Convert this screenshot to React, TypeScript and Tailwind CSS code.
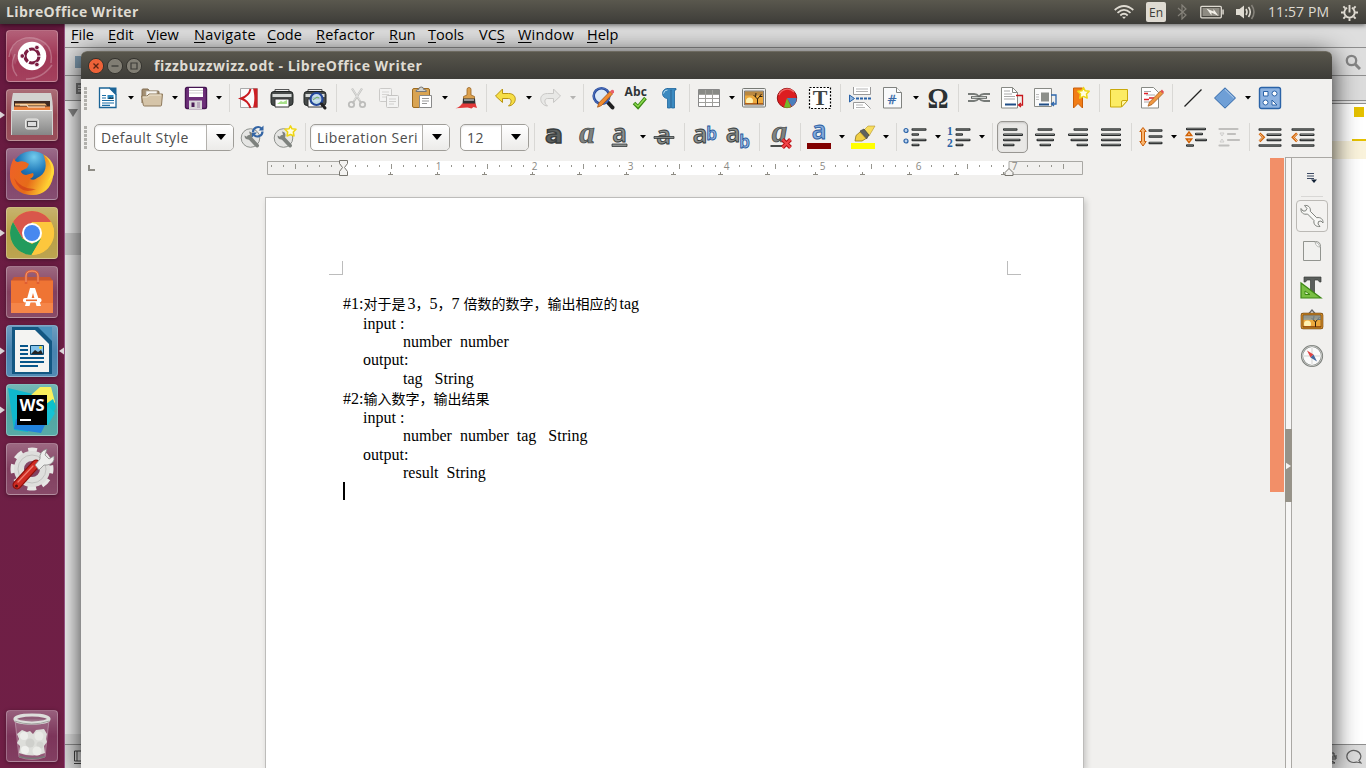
import React from "react";

type Kids = { children?: React.ReactNode; className?: string };

const UI = "font-['Open_Sans','Noto_Sans',sans-serif]";

/* ---------- shared pieces ---------- */

function Ico({ children }: Kids) {
  return (
    <svg viewBox="0 0 24 24" className="h-6 w-6 shrink-0 overflow-visible" fill="none">
      {children}
    </svg>
  );
}

function Drop({ dim }: { dim?: boolean }) {
  return (
    <span className="flex w-5 shrink-0 justify-center pl-[2px]">
      <svg viewBox="0 0 6 4" className={dim ? "h-1 w-1.5 text-[#b5b4b2]" : "h-1 w-1.5 text-black"}>
        <path d="M0 0h6L3 3.6z" fill="currentColor" />
      </svg>
    </span>
  );
}

function Sep({ className = "w-4 justify-center" }: Kids) {
  return (
    <span className={`flex shrink-0 ${className}`}>
      <span className="h-7 w-px bg-[#d9d8d5]" />
    </span>
  );
}

function Grip() {
  return (
    <span className="flex w-[3px] shrink-0 flex-col gap-px">
      {[0, 1, 2, 3, 4, 5].map((i) => (
        <span key={i} className="h-[3px] w-[3px] bg-[#b1b0ac]" />
      ))}
    </span>
  );
}

function Combo({ text, className, button }: { text: string; className: string; button: string }) {
  return (
    <span className={`flex h-[27px] shrink-0 rounded-[5px] border border-[#9f9d98] bg-white shadow-[inset_0_1px_2px_rgba(0,0,0,0.12)] ${className}`}>
      <span className="flex flex-1 items-center overflow-hidden whitespace-nowrap pl-1.5 pt-px text-[14px] leading-normal tracking-[0.42px] text-[#4c4c4c]">
        {text}
      </span>
      <span className={`flex items-center justify-center rounded-r-[4px] border-l border-[#b3b1ad] bg-linear-to-b from-white to-[#ecebe9] ${button}`}>
        <svg viewBox="0 0 10 6" className="ml-px h-1.5 w-2.5">
          <path d="M0 0h10L5 6z" fill="#000" />
        </svg>
      </span>
    </span>
  );
}

/* ---------- standard toolbar icons ---------- */

const NewDoc = () => (
  <Ico>
    <path d="M3.500 2h10l6.500 6.500V21.500H3.500z" fill="#fff" stroke="#1b6497" strokeWidth="1.300" />
    <path d="M13 1.500h7.500V9z" fill="#1b6497" />
    <path d="M6 9.500h4M6 12h4M6 14.500h12M6 17h12M6 19.300h8" stroke="#1b6ea5" strokeWidth="1.200" />
    <path d="M11.500 9h6v4h-6z" fill="#2c86bd" />
    <path d="M12 13l2-2 1.300 1 2-1v2z" fill="#153c52" />
  </Ico>
);
const Folder = () => (
  <Ico>
    <path d="M2 17V4q0-1 1-1h5l1.500 2H18q1 0 1 1v4" fill="#a48f72" stroke="#806c50" />
    <path d="M6 5h11v6H6z" fill="#f8f6f2" stroke="#b5aa98" strokeWidth=".7" />
    <path d="M1.500 10H7l2-2h13.500l-1 11q0 1-1 1h-16q-1 0-1.200-1z" fill="#d5c4a8" stroke="#8f7a5c" />
    <path d="M3 11h4.500l2-2h11.500" stroke="#efe5d3" />
  </Ico>
);
const Save = () => (
  <Ico>
    <rect x="1.500" y="1.500" width="21" height="21" rx="1.500" fill="#6d2f79" stroke="#451551" strokeWidth="1.400" />
    <path d="M5 2h14v9H5z" fill="#fff" />
    <path d="M5 4.500h14M5 7h14" stroke="#cfcfcf" />
    <path d="M5 14.500h13V23H5z" fill="#d9d6d9" />
    <path d="M7.500 16.500h3V21h-3z" fill="#4b1c56" />
    <path d="M13 16h3v6h-3z" fill="#b9a9bd" />
  </Ico>
);
const Pdf = () => (
  <Ico>
    <path d="M3.500 2.500h17v19h-17z" fill="#fafafa" stroke="#a9a9a9" />
    <path d="M13.500 3C12.500 8 8.500 11 4 12.500 8.500 14 12 17 13.500 22" stroke="#c91a1f" strokeWidth="1.900" />
    <path d="M16 2.500h4.500v19H16c1.800-6 1.800-13 0-19z" fill="#cc1f24" />
  </Ico>
);
const PrinterBody = () => (
  <>
    <path d="M5 8V3.500h14V8" fill="#eee" stroke="#555" />
    <rect x="1" y="5.500" width="22" height="14" rx="3" fill="#474b4a" stroke="#202423" />
    <path d="M2.500 8h19v3h-19z" fill="#d7dad8" />
    <path d="M5 13h14v8H5z" fill="#fff" stroke="#333" />
    <path d="M7 18l4-3 2 1 4-2v4z" fill="#a8df8b" />
  </>
);
const Print = () => (
  <Ico>
    <PrinterBody />
  </Ico>
);
const Preview = () => (
  <Ico>
    <PrinterBody />
    <circle cx="13.500" cy="13" r="6" fill="#c4dcf2" fillOpacity=".85" stroke="#24489a" strokeWidth="2.200" />
    <path d="M18.500 18l3.500 4" stroke="#222" strokeWidth="3" strokeLinecap="round" />
    <path d="M10 14l4-3 2 1" stroke="#72b558" />
  </Ico>
);
const Cut = () => (
  <Ico>
    <path d="M7 2.500l9.500 15M17 2.500L7.500 17.500" stroke="#c1c1bf" strokeWidth="2.200" />
    <path d="M7 2.500l8 12M17 2.500l-8 12" stroke="#e9e9e7" strokeWidth=".8" />
    <circle cx="6.500" cy="18.500" r="2.700" stroke="#bdbdbb" strokeWidth="1.800" />
    <circle cx="17.500" cy="18.500" r="2.700" stroke="#bdbdbb" strokeWidth="1.800" />
  </Ico>
);
const Copy = () => (
  <Ico>
    <rect x="2.500" y="2.500" width="12" height="13" rx="1" fill="#f3f3f2" stroke="#cbcac8" />
    <path d="M5 6h7M5 8.500h7M5 11h7" stroke="#d6d5d3" />
    <rect x="9.500" y="9.500" width="12" height="12" rx="1" fill="#f3f3f2" stroke="#c5c4c2" />
    <path d="M12 13h7M12 15.500h7M12 18h5" stroke="#d0cfcd" />
  </Ico>
);
const Paste = () => (
  <Ico>
    <rect x="2.500" y="2.500" width="17" height="19" rx="1.500" fill="#d9a452" stroke="#9d6b20" />
    <path d="M6 5.500q0-2 2-2h.7a2.500 2.500 0 015 0h.7q2 0 2 2z" fill="#d1d3cf" stroke="#777" />
    <path d="M9.500 9.500h12v12h-12z" fill="#fff" stroke="#8a8a8a" />
    <path d="M12 12.500h7M12 15h7M12 17.500h5" stroke="#989898" />
  </Ico>
);
const Brush = () => (
  <Ico>
    <path d="M12 9V3.500a2 2 0 014 0V9l3.500 1.500v3h-11v-3z" fill="#dca14e" stroke="#9b6623" strokeWidth=".8" />
    <path d="M8 12.500h12l.5 6h-13z" fill="#2f3232" />
    <path d="M9 14h10" stroke="#d8d8d8" strokeWidth="1.200" />
    <path d="M7 17.500h13.500l1.500 4.500-3.500-1-2 1.500-4-1-12 .8c3.500-1 5.500-2.800 6.500-4.800z" fill="#e23939" />
  </Ico>
);
const Undo = () => (
  <Ico>
    <path d="M8.500 3L1.500 10l7 6.500v-4h6c3 0 4 4 0 7.500 8-.5 10-12.500 0-12.500h-6z" fill="#f6de45" stroke="#b89412" strokeLinejoin="round" />
  </Ico>
);
const Redo = () => (
  <Ico>
    <path d="M15.500 3l7 7-7 6.500v-4h-6c-3 0-4 4 0 7.500-8-.5-10-12.500 0-12.500h6z" fill="#e8e8e6" stroke="#c9c8c6" strokeLinejoin="round" />
  </Ico>
);
const Find = () => (
  <Ico>
    <path d="M17 16.500l4.500 5" stroke="#202020" strokeWidth="4" strokeLinecap="round" />
    <circle cx="10.500" cy="10" r="7.800" fill="#dce9f6" stroke="#26499c" strokeWidth="2.600" />
    <circle cx="10.500" cy="10" r="8" stroke="#6b8fd0" strokeWidth=".6" />
    <path d="M19 5.500l2.500 2.500L10.500 19.500l-4 1.700 1.500-4.500z" fill="#f08c31" stroke="#a65312" strokeWidth=".8" />
    <path d="M19 5.500L20.500 4q1.500-.5 2.500.8v1.700L21.500 8z" fill="#ea5f6b" />
  </Ico>
);
const Spell = () => (
  <Ico>
    <text x="0.500" y="10" fontFamily="Open Sans" fontWeight="700" fontSize="12" textLength="22.500" fill="#2f3436">Abc</text>
    <path d="M10 17l4 4 7.500-9" stroke="#3c8a16" strokeWidth="3.600" />
    <path d="M10.500 17.500l3.500 3 7-8" stroke="#8fdc4f" strokeWidth="1.500" />
  </Ico>
);
const Pilcrow = () => (
  <Ico>
    <path d="M10 2.500h9V4h-1.500v18H14.500V4h-1v18H10.500V12.500a5 5 0 010-10z" fill="#3c8ac0" stroke="#1c659d" strokeWidth=".8" />
    <path d="M6.500 7.500a4 4 0 014-3.500" stroke="#b6daf0" />
  </Ico>
);
const TableI = () => (
  <Ico>
    <path d="M1.500 3.500h21v17h-21z" fill="#fff" stroke="#888" />
    <path d="M2 4h20v4H2z" fill="#888a85" />
    <path d="M2 8.500h20M2 12.500h20M2 16.500h20M8.500 4v16M15.500 4v16" stroke="#a0a09c" />
  </Ico>
);
const SunsetScene = () => (
  <>
    <path d="M3 5.500h18v13H3z" fill="#eda93d" />
    <path d="M3 5.500h18v4H3z" fill="#ba8840" />
    <circle cx="7.500" cy="15" r="3.500" fill="#fff1b0" />
    <path d="M3 17h18v1.500H3z" fill="#b45e16" />
    <path d="M15.500 18v-5l-4-4M15.500 13l4-5M13.500 11l.5-4M17.500 10.500h3" stroke="#2e210f" strokeWidth="1" />
  </>
);
const ImageI = () => (
  <Ico>
    <rect x=".5" y="2.500" width="23" height="18.500" rx="1" fill="#eee" stroke="#777a75" />
    <SunsetScene />
    <path d="M2.500 5h19v14h-19z" stroke="#666" strokeWidth=".8" />
  </Ico>
);
const Chart = () => (
  <Ico>
    <circle cx="12" cy="12" r="9.700" fill="#dc1d20" stroke="#951012" />
    <path d="M12 12h9.700a9.700 9.700 0 01-5 8.500z" fill="#4a7ebc" />
    <path d="M12 12l4 9a9.700 9.700 0 01-7 .3z" fill="#73b92b" />
    <path d="M4 9a9 9 0 0115-3" stroke="#f16b69" strokeWidth="1.200" />
  </Ico>
);
const TextBox = () => (
  <Ico>
    <rect x="1.500" y="1.500" width="21" height="21" fill="#fff" stroke="#000" strokeWidth="1.200" strokeDasharray="2 1.500" />
    <text x="12" y="19" textAnchor="middle" fontFamily="Liberation Serif" fontWeight="700" fontSize="22" fill="#3f4443">T</text>
  </Ico>
);
const PageBreak = () => (
  <Ico>
    <path d="M5.500 1v7.500h17V1" fill="#fff" stroke="#999" />
    <path d="M8 3h12M8 5.500h12" stroke="#b5b5b5" />
    <path d="M5.500 23v-6.500h11l6 6" fill="#fff" stroke="#999" />
    <path d="M8 19h7M8 21.500h9" stroke="#b5b5b5" />
    <path d="M8 12.500h15" stroke="#2b63a7" strokeWidth="2" strokeDasharray="3 1" />
    <path d="M1.500 9l5 3.500-5 3.500z" fill="#91b6df" stroke="#2b63a7" />
  </Ico>
);
const Field = () => (
  <Ico>
    <path d="M2.500 1.500h13l5 5v15.500h-18z" fill="#f9fafb" stroke="#80827f" />
    <path d="M15.500 1.500v5h5" fill="#fff" stroke="#80827f" />
    <text x="11" y="17.500" textAnchor="middle" fontFamily="DejaVu Sans" fontSize="12" fill="#386aa9" stroke="#386aa9" strokeWidth=".3">#</text>
  </Ico>
);
const Omega = () => (
  <Ico>
    <text x="1.500" y="21.500" fontFamily="Liberation Serif" fontWeight="700" fontSize="29" textLength="21" lengthAdjust="spacingAndGlyphs" fill="#2b3133">Ω</text>
  </Ico>
);
const Link = () => (
  <Ico>
    <path d="M1 8h6q3 0 5 2.500Q14 8 17 8h6M1 15h6q3 0 5-2.500 2 2.500 5 2.500h6" stroke="#777b78" strokeWidth="1.800" />
    <path d="M4 11.500h16" stroke="#5d615e" strokeWidth="2.600" />
    <path d="M5 11.500h14" stroke="#d8dbd8" strokeWidth=".9" />
  </Ico>
);
const Footnote = () => (
  <Ico>
    <path d="M1.500 1.500h11l5 5v15.500h-16z" fill="#fff" stroke="#888a85" />
    <path d="M12.500 1.500v5h5" stroke="#888a85" />
    <path d="M4 5h6M4 8h8M4 10.500h11M4 13h11" stroke="#aaa" />
    <path d="M5 18.500h11" stroke="#1e4d86" strokeWidth="2" />
    <path d="M16 9.500h6.500v9.500H19M21 17l-2.500 2 2.500 2" stroke="#c8171b" strokeWidth="1.300" />
  </Ico>
);
const Endnote = () => (
  <Ico>
    <path d="M1.500 2.500h17v18h-17z" fill="#fbfbfb" stroke="#888a85" />
    <path d="M8 6.500h8v9H8z" fill="#8c8f8b" />
    <path d="M3 8.500h3M3 11h3M3 13.500h3" stroke="#bbb" />
    <path d="M6 18.500h10" stroke="#1e4d86" strokeWidth="2" />
    <path d="M18 9h5v9h-3.500M21 16l-2.500 2 2.500 2" stroke="#2d66ab" strokeWidth="1.300" />
  </Ico>
);
const Star = ({ d = "M16.500 1.500l1.700 3.300 4 .4-2.700 2.900.7 4-3.700-1.700-3.700 1.700.7-4-2.700-2.900 4-.4z" }: { d?: string }) => (
  <path d={d} fill="#fffde0" stroke="#efd613" strokeWidth="1.500" strokeLinejoin="round" />
);
const Bookmark = () => (
  <Ico>
    <path d="M6.500 2h9v20L11 17.500 6.500 22z" fill="#f27d16" stroke="#c95e08" />
    <Star />
  </Ico>
);
const Note = () => (
  <Ico>
    <path d="M3.500 3.500h17v11l-6 6.500h-11z" fill="#fcec64" stroke="#c9a90b" />
    <path d="M14.500 21v-5q0-1.500 1.500-1.500h4.500z" fill="#fff6a7" stroke="#c9a90b" />
  </Ico>
);
const Track = () => (
  <Ico>
    <path d="M1.500 1.500h12l5 5v15.500h-17z" fill="#fff" stroke="#888a85" />
    <path d="M4 5.500h7M6 9h9M4 16h6" stroke="#aaa" />
    <path d="M4 7.500h4M9 12h5M4 13.500h5" stroke="#e12128" strokeWidth="1.300" />
    <path d="M20.500 5l2.500 2.500L12 18.500l-4 1.700 1.500-4z" fill="#ef9841" stroke="#a55a19" strokeWidth=".8" />
    <path d="M20.500 5L22 3.500 24 6l-1 1.500z" fill="#e44b4f" />
  </Ico>
);
const LineI = () => (
  <Ico>
    <path d="M3.500 20.500l17-17" stroke="#222" strokeWidth="1.300" />
  </Ico>
);
const Diamond = () => (
  <Ico>
    <path d="M12 1.800L22.500 12 12 22.200 1.500 12z" fill="#6f9fd6" stroke="#2f67a9" />
    <path d="M12 3.500L20.800 12" stroke="#b7d0ec" />
  </Ico>
);
const Shapes = () => (
  <Ico>
    <rect x="1.500" y="1.500" width="21" height="21" rx="2" fill="#8db2e0" stroke="#2b63a7" strokeWidth="1.400" />
    <path d="M5.500 5.500h4.500V10H5.500zM14 14v5h5z" fill="#fff" stroke="#2b63a7" />
    <circle cx="16.500" cy="7.500" r="2.500" fill="#fff" stroke="#2b63a7" />
    <circle cx="7.500" cy="16.500" r="2.500" fill="#fff" stroke="#2b63a7" />
  </Ico>
);

/* ---------- formatting toolbar icons ---------- */

const WrenchDisc = () => (
  <>
    <circle cx="10.500" cy="13" r="9.300" fill="#e5e5e3" stroke="#8e918d" />
    <path d="M9 12l8 8.500" stroke="#7e827e" strokeWidth="4" strokeLinecap="round" />
    <path d="M9 6.500a4 4 0 11-4.500 4l3 1.500L10 9.500z" fill="#7e827e" />
  </>
);
const StyleUpdate = () => (
  <Ico>
    <WrenchDisc />
    <path d="M13 7a5 5 0 018.500-3.500M22.500 6.500A5 5 0 0114 10" stroke="#3465a4" strokeWidth="2.200" />
    <path d="M23.500.5v5h-5zM12 12.500v-5h5z" fill="#3465a4" />
  </Ico>
);
const StyleNew = () => (
  <Ico>
    <WrenchDisc />
    <Star d="M17.500.8l1.500 3 4 .5-2.700 2.700.7 4-3.500-1.500L14 11l.7-4L12 4.300l4-.5z" />
  </Ico>
);

const SansA = ({ x = 11.5, y = 18, fill = "#8b8f8d", stroke = "#343a3b" }: { x?: number; y?: number; fill?: string; stroke?: string }) => (
  <text x={x} y={y} textAnchor="middle" fontFamily="Noto Sans" fontWeight="600" fontSize="25" fill={fill} stroke={stroke} strokeWidth=".9">
    a
  </text>
);
const SlantA = ({ x, y }: { x: number; y: number }) => (
  <text x={x} y={y} textAnchor="middle" fontFamily="Liberation Serif" fontWeight="700" fontStyle="italic" fontSize="31" fill="#7f8381" stroke="#34383a" strokeWidth=".7">
    a
  </text>
);
const BoldA = () => (
  <Ico>
    <text x="3" y="18" textLength="18" lengthAdjust="spacingAndGlyphs" fontFamily="DejaVu Sans" fontWeight="700" fontSize="25" fill="#5c605f" stroke="#3a3e3e" strokeWidth="1.400">a</text>
  </Ico>
);
const ItalicA = () => (
  <Ico>
    <SlantA x={12} y={18} />
  </Ico>
);
const UnderA = () => (
  <Ico>
    <SansA y={16.5} />
    <path d="M4 19h15v2.500H4z" fill="#8c908e" stroke="#34383a" strokeWidth=".8" />
  </Ico>
);
const StrikeA = () => (
  <Ico>
    <SansA y={18.5} />
    <path d="M2 11.500h20v2H2z" fill="#858987" stroke="#34383a" strokeWidth=".8" />
  </Ico>
);
const SmallB = ({ y }: { y: number }) => (
  <text x="18.500" y={y} textAnchor="middle" fontFamily="Noto Sans" fontWeight="600" fontSize="17" fill="#9dbde4" stroke="#285a9e" strokeWidth=".9">
    b
  </text>
);
const SuperB = () => (
  <Ico>
    <SansA x={7} y={18} />
    <SmallB y={14.5} />
  </Ico>
);
const SubB = () => (
  <Ico>
    <SansA x={7} y={16.500} />
    <SmallB y={22.500} />
  </Ico>
);
const ClearFmt = () => (
  <Ico>
    <SlantA x={10.500} y={17} />
    <path d="M1.500 21h12" stroke="#4a4d4b" strokeWidth="2" />
    <path d="M13.500 14.500l8 8m0-8l-8 8" stroke="#b60e12" strokeWidth="4" />
    <path d="M13.500 14.500l8 8m0-8l-8 8" stroke="#f04448" strokeWidth="2" />
  </Ico>
);
const FontColor = () => (
  <Ico>
    <SansA x={12} y={14} fill="#82aadb" stroke="#285a9e" />
    <path d="M0 18h24v6H0z" fill="#800000" />
  </Ico>
);
const Highlight = () => (
  <Ico>
    <path d="M13 5l4-4h7l-6 10z" fill="#f7dd5f" stroke="#b5952a" strokeWidth=".6" />
    <path d="M9 6l4-2 5 6-2.500 4z" fill="#5e625f" stroke="#303331" strokeWidth=".6" />
    <path d="M9 7l6 6.500L11 16H4l1-5.500z" fill="#f1cf44" stroke="#8c7420" strokeWidth=".8" />
    <path d="M0 18h24v6H0z" fill="#ffff00" />
  </Ico>
);

function Bars({ rows }: { rows: [number, number, number][] }) {
  return (
    <>
      {rows.map(([x, y, w], i) => (
        <g key={i}>
          <rect x={x} y={y - 1.3} width={w} height="2.600" rx="1" fill="#252829" />
          <path d={`M${x + 1} ${y - 0.3}h${w - 2}`} stroke="#9a9c9a" strokeWidth=".7" />
        </g>
      ))}
    </>
  );
}
const Bullets = () => (
  <Ico>
    <Bars rows={[[8.5, 4.5, 15], [8.5, 9.5, 7.5], [8.5, 15, 15], [8.5, 20, 8]]} />
    <circle cx="3" cy="5.500" r="2" fill="#bcd3ee" stroke="#2b63a7" strokeWidth="1.200" />
    <circle cx="3" cy="16" r="2" fill="#bcd3ee" stroke="#2b63a7" strokeWidth="1.200" />
  </Ico>
);
const Numbers = () => (
  <Ico>
    <Bars rows={[[8.5, 4.5, 15], [8.5, 9.5, 7.5], [8.5, 15, 15], [8.5, 20, 8]]} />
    <g fontFamily="Liberation Serif" fontWeight="700" fontSize="11.500" fill="#2b63a7">
      <text x="0" y="10">1</text>
      <text x="0" y="21.500">2</text>
    </g>
  </Ico>
);
const AlignL = () => (
  <Ico>
    <Bars rows={[[2, 4.5, 14.5], [2, 9.8, 20], [2, 15, 17.5], [2, 20, 11.5]]} />
  </Ico>
);
const AlignC = () => (
  <Ico>
    <Bars rows={[[4.5, 4.5, 15], [2, 9.8, 20], [3.5, 15, 17.5], [6.5, 20, 11.5]]} />
  </Ico>
);
const AlignR = () => (
  <Ico>
    <Bars rows={[[7.5, 4.5, 14.5], [2, 9.8, 20], [4.5, 15, 17.5], [10.5, 20, 11.5]]} />
  </Ico>
);
const AlignJ = () => (
  <Ico>
    <Bars rows={[[2, 4.5, 20], [2, 9.8, 20], [2, 15, 20], [2, 20, 20]]} />
  </Ico>
);
const LineSpace = () => (
  <Ico>
    <Bars rows={[[9.5, 5.5, 14], [9.5, 11.5, 14], [9.5, 18, 14]]} />
    <path d="M4 2.500L.8 6.500h1.700v10H.8L4 21l3.200-4.500H5.500v-10h1.700z" fill="#f9b56e" stroke="#c95d08" />
  </Ico>
);
const ParaInc = () => (
  <Ico>
    <Bars rows={[[2, 4, 20], [11, 9, 8], [11, 15, 12], [2, 20.5, 8]]} />
    <path d="M5 7l2.700 3.500H2.300zM5 17.500L7.700 14H2.300z" fill="#fbd0a2" stroke="#d16205" strokeWidth="1.400" />
  </Ico>
);
const ParaDec = () => (
  <Ico>
    <path d="M2.500 4h18M11 9h7M11 15h11M2.500 20.500h9" stroke="#c0bfbd" strokeWidth="2.200" strokeLinecap="round" />
    <path d="M5 11l2-3H3zM5 14l2 3H3z" fill="#eee" stroke="#cfcecc" />
  </Ico>
);
const IndentInc = () => (
  <Ico>
    <Bars rows={[[0.5, 4.5, 23], [8.5, 9.8, 15], [8.5, 15, 15], [0.5, 20.5, 23]]} />
    <path d="M1.500 8.300l4 4-4 4" stroke="#d16205" strokeWidth="2.600" />
    <path d="M1.500 8.600l3.500 3.700-3.500 3.700" stroke="#fcd9b5" strokeWidth=".8" />
  </Ico>
);
const IndentDec = () => (
  <Ico>
    <Bars rows={[[0.5, 4.5, 23], [8.5, 9.8, 15], [8.5, 15, 15], [0.5, 20.5, 23]]} />
    <path d="M6 8.300l-4 4 4 4" stroke="#d16205" strokeWidth="2.600" />
    <path d="M6 8.600l-3.500 3.700L6 16" stroke="#fcd9b5" strokeWidth=".8" />
  </Ico>
);

/* ---------- top panel ---------- */

function TopPanel() {
  return (
    <header className="relative z-20 flex h-6 shrink-0 items-center bg-linear-to-b from-[#5a584e] to-[#3d3c38] pl-1.5 pr-2 text-[#dfdbd2] shadow-[0_1px_5px_rgba(0,0,0,0.6)]">
      <span className="text-[14px] font-bold leading-none tracking-[0.38px]">LibreOffice Writer</span>
      <div className="ml-auto flex items-center">
        <svg viewBox="0 0 20 14" className="h-3.5 w-5" fill="none" stroke="#dfdbd2" strokeWidth="1.800">
          <path d="M.7 5Q10-3 19.300 5M3.500 7.800Q10 2 16.500 7.800M6.300 10.500Q10 7 13.700 10.500" />
          <path d="M8 11.800h4L10 14z" fill="#dfdbd2" stroke="none" />
        </svg>
        <span className="ml-3 flex h-5 w-5 items-center justify-center rounded-[2px] bg-[#dfdbd2] pt-px text-[12px] leading-none text-[#3c3b37]">En</span>
        <svg viewBox="0 0 10 16" className="ml-[11px] h-4 w-2.5" fill="none" stroke="#85827a" strokeWidth="1.200">
          <path d="M1 4l8 7-4 4V1l4 4-8 7" />
        </svg>
        <svg viewBox="0 0 24 14" className="ml-[13px] h-3.5 w-6" fill="none">
          <rect x=".8" y="1.300" width="20.500" height="11.500" rx="1" stroke="#dfdbd2" strokeWidth="1.300" />
          <path d="M2.500 3h17v8h-17z" fill="#8e8b82" />
          <path d="M22.300 4.500h1.500v5h-1.500z" fill="#dfdbd2" />
          <path d="M6.500 3.500l7 3 0-2.500 5 7-7-3.500v3z" fill="#f3f0e8" />
        </svg>
        <svg viewBox="0 0 20 16" className="ml-3 h-4 w-5" fill="none">
          <path d="M0 5h3.500L8 1.500v13L3.500 11H0z" fill="#dfdbd2" />
          <path d="M10 5q2 3 0 6M12.500 3q3.500 5 0 10" stroke="#dfdbd2" strokeWidth="1.600" />
          <path d="M15.500 1q5 7 0 14" stroke="#85827a" strokeWidth="1.600" />
        </svg>
        <span className="ml-3 w-[62px] whitespace-nowrap text-[14px] leading-none tracking-[0.1px]">11:57 PM</span>
        <svg viewBox="0 0 18 18" className="ml-[11px] h-[17px] w-[17px]" fill="none" stroke="#dfdbd2">
          <path d="M6.500 4A5.500 5.500 0 1011.500 4" strokeWidth="2" />
          <path d="M9 1v8" strokeWidth="2" />
          <path d="M0 9h3M15 9h3M9 15v3M2.500 2.500l2 2M15.500 2.500l-2 2M2.500 15.500l2-2M15.500 15.500l-2-2" strokeWidth="2" />
        </svg>
      </div>
    </header>
  );
}

/* ---------- launcher ---------- */

function Tile({ children, className = "bg-[#7f3559]", left, right }: Kids & { left?: boolean; right?: boolean }) {
  return (
    <div className="flex h-[52px] w-16 shrink-0 items-center">
      <svg viewBox="0 0 6 8" className="h-2 w-1.5">
        {left && <path d="M0 0.500L5 4 0 7.500z" fill="#dcd5d8" />}
      </svg>
      <div className={`flex h-[52px] w-[52px] items-center justify-center rounded-[4px] border border-white/25 bg-linear-to-b from-white/25 via-white/5 to-white/10 shadow-[0_1px_4px_rgba(0,0,0,0.35)] ${className}`}>
        <svg viewBox="0 0 52 52" className="h-[52px] w-[52px] shrink-0" fill="none">
          {children}
        </svg>
      </div>
      <svg viewBox="0 0 6 8" className="h-2 w-1.5">
        {right && <path d="M6 0.500L1 4 6 7.500z" fill="#dcd5d8" />}
      </svg>
    </div>
  );
}

function Launcher() {
  return (
    <aside className="flex w-[65px] shrink-0 flex-col gap-[7px] border-r border-[#935080] bg-linear-to-b from-[#67193f] via-[#6d1f45] to-[#701f46] pt-1.5">
      <Tile className="bg-[#9a2c4c]">
        <path d="M3 27C5 8 24 3 39 13q8 7 6 20M11 46Q3 36 9 24M20 49q16 0 26-14" stroke="#fff" strokeOpacity=".25" strokeWidth="1.500" />
        <path d="M4 20Q20 0 40 14l-6 5Q20 8 9 35z" fill="#fff" fillOpacity=".12" />
        <circle cx="26" cy="26" r="14.300" fill="#fff" />
        <circle cx="26" cy="26" r="7" stroke="#7b1d42" strokeWidth="3.200" strokeDasharray="13.200 1.460" strokeDashoffset="-0.700" />
        <circle cx="16.300" cy="26" r="2.300" fill="#7b1d42" stroke="#fff" strokeWidth=".8" />
        <circle cx="30.900" cy="17.500" r="2.300" fill="#7b1d42" stroke="#fff" strokeWidth=".8" />
        <circle cx="30.900" cy="34.500" r="2.300" fill="#7b1d42" stroke="#fff" strokeWidth=".8" />
      </Tile>
      <Tile left className="bg-[#8e3c49]">
        <defs>
          <linearGradient id="cab" x1="0" y1="0" x2="0" y2="1">
            <stop offset="0" stopColor="#c4c4c2" />
            <stop offset="1" stopColor="#868686" />
          </linearGradient>
        </defs>
        <path d="M7 4h38q2 8 2 20v22H5V24Q5 12 7 4z" fill="#d2d2d0" />
        <path d="M8 12h36v10H8z" fill="#3f2a22" />
        <path d="M9 14.500h30l2 2H9z" fill="#f7be7b" />
        <path d="M8 17.500h36v5H8z" fill="#e8813d" />
        <path d="M14 16h7l1 2h17" stroke="#fff0dc" />
        <path d="M6 21h40v25H6z" fill="url(#cab)" />
        <path d="M6 21.500h40" stroke="#f2f2f0" />
        <rect x="19.500" y="30" width="13" height="10" rx="2" fill="#c9c9c7" stroke="#e8e8e6" />
        <rect x="21.500" y="32.500" width="9" height="5" fill="#ddd" stroke="#555" />
      </Tile>
      <Tile className="bg-[#793a62]">
        <defs>
          <radialGradient id="globe" cx=".55" cy=".15" r=".8">
            <stop offset="0" stopColor="#73cbed" />
            <stop offset=".5" stopColor="#1b75b7" />
            <stop offset="1" stopColor="#17336e" />
          </radialGradient>
          <linearGradient id="fox" x1="0" y1="0" x2="1" y2=".4">
            <stop offset="0" stopColor="#f0602a" />
            <stop offset=".6" stopColor="#e66b19" />
            <stop offset="1" stopColor="#ffce32" />
          </linearGradient>
        </defs>
        <circle cx="26" cy="23" r="20" fill="url(#globe)" />
        <path d="M8 10q1 4 4 4 6-2 11 2l-2 4-6 3q0 3 5 4l7-2q2 3-3 6 4 2 7-1c9-4 11-12 6-24q12 9 10 23C45 41 36 48 25 47 11 46 3 37 4 25 4 18 6 14 8 10z" fill="url(#fox)" />
        <path d="M38 7c8 7 10 17 4 26 5-3 6-6 6-9 1-7-4-14-10-17z" fill="#ffd83a" />
        <path d="M8 30q8 12 22 11Q14 48 8 30z" fill="#c9371b" fillOpacity=".6" />
      </Tile>
      <Tile left className="bg-[#b59a3d]">
        <circle cx="26" cy="26" r="22" fill="#fdc73d" />
        <path d="M7 15A22 22 0 0145 15H26l-9.500 16.500z" fill="#d9574b" />
        <path d="M7 15A22 22 0 0025.500 48L35 31.500 26 37 16.500 31.500z" fill="#229b5d" />
        <path d="M26 15h19a22 22 0 01-19.500 33L36 31z" fill="#fdc73d" />
        <circle cx="26" cy="26" r="10" fill="#fff" />
        <circle cx="26" cy="26" r="8" fill="#4788ef" />
      </Tile>
      <Tile className="bg-[#7c3656]">
        <path d="M5 15l3-4h36l3 4z" fill="#c9572f" />
        <path d="M5 14.500h42V47H5z" fill="#ef7434" />
        <path d="M5 37h42v10H5z" fill="#f58548" />
        <path d="M20 18V10q0-5 6-5t6 5v8" stroke="#df5d32" strokeWidth="2.600" />
        <path d="M20 16V10q0-5 6-5t6 5v6" stroke="#f9ae87" strokeWidth=".8" />
        <path d="M19 40h4.500L27 27l3.500 13H35l-6-18h-5z" fill="#fff" />
        <rect x="17" y="32" width="18.500" height="4.500" rx="2" fill="#fff" />
        <path d="M20 34.300h11" stroke="#e96e34" strokeWidth="1.600" />
      </Tile>
      <Tile left right className="bg-[#3f7dab]">
        <path d="M6 2h40v47H6z" fill="#135782" />
        <path d="M32 2h14v14z" fill="#4a91bd" />
        <path d="M9 5h20l14 14v28H9z" fill="#f4f4f2" />
        <path d="M14 21h8M14 25h8M14 29h8M14 33h24M14 37h24M14 41h18" stroke="#08568a" strokeWidth="2" />
        <path d="M24.500 20.500h13v9h-13z" fill="#83c3eb" stroke="#08466e" />
        <path d="M25 29l4-4 3 2 3-2 2 4z" fill="#222" />
        <circle cx="34.500" cy="22.500" r="1.500" fill="#f5d52a" />
      </Tile>
      <Tile left className="bg-[#46a19d]">
        <path d="M2 4l25 6-5 38-14-2z" fill="#0fb7cc" />
        <path d="M24 12l10-9h11l4 15-8 10z" fill="#f9f05d" />
        <path d="M40 20l7-5 3 8-8 18z" fill="#0dc2ca" />
        <path d="M8 45l2-10 30 4-5 10z" fill="#2282dc" />
        <path d="M26 41h16l7-12-6-6z" fill="#16c2d5" />
        <path d="M11 11h30v30H11z" fill="#000" />
        <text x="13.500" y="27" fontFamily="Open Sans" fontWeight="700" fontSize="16.500" textLength="25" lengthAdjust="spacingAndGlyphs" fill="#fff">WS</text>
        <path d="M14 36h11" stroke="#fff" strokeWidth="2" />
      </Tile>
      <Tile className="bg-[#7b3658]">
        <circle cx="26" cy="26" r="18.500" stroke="#e7e7e5" strokeWidth="6" strokeDasharray="8.500 6.030" strokeDashoffset="4.250" />
        <circle cx="26" cy="26" r="13" stroke="#dededc" strokeWidth="10" />
        <circle cx="26" cy="26" r="14" stroke="#c2c2c0" />
        <path d="M11 42L30 21" stroke="#8f100c" strokeWidth="9" strokeLinecap="round" />
        <path d="M11 42L30 21" stroke="#cf2a22" strokeWidth="6.500" strokeLinecap="round" />
        <path d="M12 39L27 23" stroke="#f07c70" strokeWidth="1.300" strokeLinecap="round" />
        <path d="M29 22l5-6Q33 8 41 6l-2 6 4 4 5-3q1 8-7 9h-3l-5 5z" fill="#ecedeb" stroke="#8c8c8a" strokeWidth=".8" />
        <circle cx="10.500" cy="43" r="1.500" fill="#54100e" />
      </Tile>
      <div className="mb-1.5 mt-auto">
        <Tile className="bg-[#752a51]">
          <path d="M9 10l4 37q13 5 26 0l4-37z" fill="#fff" fillOpacity=".15" stroke="#fff" strokeOpacity=".3" />
          <path d="M11 24l5-4 5 2 3-1 3 3 3-4 8-1 3 5-1 5 1 3-3 4 1 7q-12 5-26 0l1-7-3-3 2-4z" fill="#dddeda" />
          <circle cx="18" cy="26" r="4" fill="#ecedea" />
          <circle cx="33" cy="26" r="4.500" fill="#e9eae6" />
          <circle cx="24" cy="33" r="4.500" fill="#cfd0cc" />
          <circle cx="34" cy="35" r="3.500" fill="#d2d3cf" />
          <circle cx="19" cy="40" r="4" fill="#f0f1ee" />
          <circle cx="31" cy="41" r="4.500" fill="#ebece8" />
          <path d="M13 46.500q13 4 26 0" stroke="#777a78" strokeWidth="1.500" />
          <ellipse cx="26" cy="9" rx="17" ry="4" fill="#8f6a7c" fillOpacity=".4" stroke="#dddedb" strokeWidth="3.200" />
          <path d="M8.500 11q17 6 35 0" stroke="#a2a3a0" />
        </Tile>
      </div>
    </aside>
  );
}

/* ---------- window behind ---------- */

const menu: [string, string][] = [
  ["File", "w-[37px]"],
  ["Edit", "w-[39px]"],
  ["View", "w-[47px]"],
  ["Navigate", "w-[73px] tracking-[0.35px]"],
  ["Code", "w-[49px]"],
  ["Refactor", "w-[73px] tracking-[0.25px]"],
  ["Run", "w-[39px]"],
  ["Tools", "w-[51px]"],
  ["VCS", "w-[39px]"],
  ["Window", "w-[69px] tracking-[0.2px]"],
  ["Help", "w-[40px]"],
];

function BackWindow() {
  return (
    <div className="flex flex-1 flex-col bg-white">
      <nav className="flex h-[23px] shrink-0 items-start bg-[#dedede] pl-1.5 pt-[3px] text-[14.500px] leading-4 text-black">
        {menu.map(([m, w]) => (
          <span key={m} className={`whitespace-nowrap ${w}`}>
            {m === "VCS" ? (
              <>VC<span className="underline underline-offset-2">S</span></>
            ) : (
              <><span className="underline underline-offset-2">{m[0]}</span>{m.slice(1)}</>
            )}
          </span>
        ))}
      </nav>
      <div className="flex h-7 shrink-0 items-center justify-between border-t border-[#8e8e8e] bg-[#dedede] pl-2.5 pr-[5px]">
        <span className="h-3 w-4 bg-[#7f9bb0]" />
        <svg viewBox="0 0 16 16" className="h-4 w-4" fill="none" stroke="#858585" strokeWidth="2.300">
          <circle cx="6.500" cy="6.500" r="4.700" />
          <path d="M10 10l5 5" strokeWidth="3" />
        </svg>
      </div>
      <div className="flex h-[26px] shrink-0 items-center border-b border-t border-[#8e8e8e] bg-[#dcdcdc] pl-2.5">
        <svg viewBox="0 0 12 12" className="h-3 w-3">
          <path d="M1 1h10v11H1z" fill="#777" />
          <path d="M3 4h5M3 6.500h5M3 9h5" stroke="#eee" />
        </svg>
      </div>
      <div className="flex flex-1 justify-between">
        <div className="flex w-4 flex-col bg-[#f3f3f3]">
          <svg viewBox="0 0 10 8" className="ml-[3px] mt-2 h-2 w-2.5">
            <path d="M0 0h10L5 8z" fill="#8a8a8a" />
          </svg>
          <span className="mt-[116px] h-[22px] bg-[#d0d0d0]" />
          <span className="mt-auto h-2.5 bg-[#dedede]" />
        </div>
        <div className="flex w-[34px] flex-col items-end">
          <span className="h-[3px] w-full border-b border-[#8e8e8e] bg-[#e6e6e6]" />
          <span className="mr-0.5 mt-[3px] h-2.5 w-2.5 bg-[#e5c100]" />
          <span className="mt-[22px] h-0.5 w-3.5 bg-[#e5c100]" />
          <span className="h-[18px] w-full bg-[#faf3dc]" />
        </div>
      </div>
      <div className="flex h-6 shrink-0 items-center justify-between border-t border-[#8e8e8e] bg-[#dcdcdc] pl-[9px] pr-1">
        <svg viewBox="0 0 12 14" className="h-3.5 w-3" fill="none" stroke="#3f3f3f">
          <path d="M.5 1h11v10H.5zM3 1v10M0 13.500h12" />
        </svg>
        <div className="flex items-center gap-2">
          <svg viewBox="0 0 12 14" className="h-3.5 w-3" fill="none" stroke="#4b4b4b">
            <path d="M1 3h7v3h3M2 7h8v2H3l6 4H2" />
          </svg>
          <svg viewBox="0 0 16 15" className="h-[15px] w-4" fill="none" stroke="#626262" strokeWidth="1.200">
            <path d="M13 11.500a7 6 0 10-2.500 1.500L15 14z" />
          </svg>
        </div>
      </div>
    </div>
  );
}

/* ---------- writer ---------- */

function TitleBar() {
  return (
    <div className="flex h-7 shrink-0 items-center rounded-t-[6px] border-t border-[#6d6a60] bg-linear-to-b from-[#58564c] to-[#3d3c38] pl-[6px]">
      <svg viewBox="0 0 56 18" className="h-[18px] w-14" fill="none">
        <circle cx="9" cy="9" r="7.600" fill="#ee6238" stroke="#35342f" />
        <path d="M6.500 6.500l5 5m0-5l-5 5" stroke="#5b2413" strokeWidth="1.300" />
        <circle cx="28" cy="9" r="7.600" fill="#817e74" stroke="#35342f" />
        <path d="M24.500 9h7" stroke="#3c3b37" strokeWidth="1.300" />
        <circle cx="47" cy="9" r="7.600" fill="#817e74" stroke="#35342f" />
        <path d="M44 6h6v6h-6z" stroke="#3c3b37" strokeWidth="1.200" />
      </svg>
      <span className="ml-[11px] text-[14px] font-bold leading-none tracking-[0.49px] text-[#dfdbd2]">fizzbuzzwizz.odt - LibreOffice Writer</span>
    </div>
  );
}

const G = ({ className = "w-[9px]" }: Kids) => <span className={`shrink-0 ${className}`} />;

function StandardBar() {
  return (
    <div className="flex h-[38px] shrink-0 items-center pl-[3px]">
      <Grip />
      <G />
      <NewDoc /><Drop /><Folder /><Drop /><Save /><Drop />
      <Sep className="w-[9px] pl-px" />
      <Pdf /><G /><Print /><G /><Preview />
      <Sep className="w-[18px] justify-center" />
      <Cut /><G className="w-2" /><Copy /><G /><Paste /><Drop /><G className="w-px" /><Brush />
      <Sep className="w-[15px] justify-center" />
      <Undo /><Drop /><Redo /><Drop dim />
      <Sep className="w-[9px] pl-px" />
      <Find /><G /><Spell /><G /><Pilcrow />
      <Sep />
      <TableI /><Drop /><G className="w-px" /><ImageI /><G /><Chart /><G /><TextBox />
      <Sep />
      <PageBreak /><G /><Field /><Drop /><G className="w-px" /><Omega />
      <Sep className="w-[17px] justify-center" />
      <Link /><G /><Footnote /><G /><Endnote /><G className="w-2.5" /><Bookmark />
      <Sep />
      <Note /><G /><Track />
      <Sep className="w-[17px] justify-center" />
      <LineI /><G className="w-2" /><Diamond /><Drop /><G className="w-px" /><Shapes />
    </div>
  );
}

function FormatBar() {
  return (
    <div className="flex h-10 shrink-0 items-center pl-[3px]">
      <Grip />
      <G className="w-[7px]" />
      <Combo text="Default Style" className="w-[140px]" button="w-[27px]" />
      <G className="w-1.5" />
      <StyleUpdate /><G /><StyleNew />
      <Sep className="w-[13px] justify-center pl-1" />
      <Combo text="Liberation Seri" className="w-[140px]" button="w-[27px]" />
      <G className="w-2.5" />
      <Combo text="12" className="w-[69px]" button="w-[27px]" />
      <Sep className="w-[13px] justify-start pl-[5px]" />
      <BoldA /><G /><ItalicA /><G /><UnderA /><Drop /><StrikeA />
      <Sep className="w-[17px] justify-center" />
      <SuperB /><G /><SubB />
      <Sep className="w-[19px] justify-center" />
      <ClearFmt />
      <Sep className="w-3.5 justify-center" />
      <FontColor /><Drop /><Highlight /><Drop />
      <Sep className="w-2 pl-px" />
      <Bullets /><Drop /><Numbers /><Drop />
      <Sep className="w-1.5 pl-px" />
      <span className="flex h-8 w-[31px] shrink-0 items-center justify-center rounded-[5px] border border-[#989692] bg-[#e9e8e6] shadow-[inset_0_1px_2px_rgba(0,0,0,0.15)]">
        <AlignL />
      </span>
      <G className="w-[5px]" />
      <AlignC /><G /><AlignR /><G /><AlignJ />
      <Sep />
      <LineSpace /><Drop /><G className="w-px" /><ParaInc /><G /><ParaDec />
      <Sep className="w-[17px] justify-center" />
      <IndentInc /><G /><IndentDec />
    </div>
  );
}

const ticks = Array.from({ length: 67 }, (_, i) => i - 6);
const tabs = Array.from({ length: 14 }, (_, i) => 76 + 47.15 * (i + 1));

function Ruler() {
  return (
    <svg viewBox="0 0 818 18" className="h-[18px] w-[818px] shrink-0" fill="none">
      <path d="M76 2h666v14H76z" fill="#fff" />
      <path d="M76 2.500H.5v13H76M742 2.500h73.500v13H742z" stroke="#a9a8a4" />
      {ticks.map((t) => {
        if (t % 8 === 0 && t >= 0) return null;
        const x = Math.round(76 + t * 12) + 0.5;
        return <path key={t} d={t % 4 === 0 ? `M${x} 5v5` : `M${x} 6v2`} stroke="#97968f" />;
      })}
      {[1, 2, 3, 4, 5, 6, 7].map((n) => (
        <text key={n} x={75.5 + n * 96} y="11" textAnchor="middle" fontFamily="Open Sans" fontSize="10" fill="#8a8984">
          {n}
        </text>
      ))}
      {tabs.map((x) => (
        <path key={x} d={`M${Math.round(x) + 0.5} 13v3M${Math.round(x) - 2} 15.500h5`} stroke="#8e8c84" />
      ))}
      <path d="M72.500 1.500h8v3l-3 4 3 4v4h-8v-4l3-4-3-4z" fill="#f4f3f1" stroke="#77756e" />
      <path d="M742 9.500l4 4v3h-8v-3z" fill="#f4f3f1" stroke="#77756e" />
    </svg>
  );
}

type Seg = [string, string];
const cn = "font-['Noto_Sans_CJK_SC',sans-serif] text-[14px] leading-[16px]";
const lines: { h: string; segs: Seg[] }[] = [
  {
    h: "h-[21px] pt-px",
    segs: [
      ["#1:", ""],
      ["对于是", cn],
      ["3", "ml-[2px]"],
      ["，", cn],
      ["5", ""],
      ["，", cn],
      ["7", ""],
      ["倍数的数字，输出相应的", `ml-[4px] ${cn}`],
      ["tag", "ml-[2px]"],
    ],
  },
  { h: "h-[18px]", segs: [["     input :", ""]] },
  { h: "h-[18px]", segs: [["               number  number", ""]] },
  { h: "h-[19px]", segs: [["     output:", ""]] },
  { h: "h-5", segs: [["               tag   String", ""]] },
  { h: "h-[19px]", segs: [["#2:", ""], ["输入数字，输出结果", cn]] },
  { h: "h-[18px]", segs: [["     input :", ""]] },
  { h: "h-[19px]", segs: [["               number  number  tag   String", ""]] },
  { h: "h-[18px]", segs: [["     output:", ""]] },
  { h: "h-[18px]", segs: [["               result  String", ""]] },
];

function Page() {
  return (
    <div className="mt-5 flex w-[819px] flex-1 flex-col border border-b-0 border-[#bdbcba] bg-white pt-[63px] shadow-[2px_3px_6px_rgba(0,0,0,0.18)]">
      <div className="flex justify-between pl-[63px] pr-[62px]">
        <span className="h-3.5 w-3.5 border-b border-r border-[#bcbcbc]" />
        <span className="h-3.5 w-3.5 border-b border-l border-[#bcbcbc]" />
      </div>
      <div className="mt-[19px] flex flex-col pl-[77px] font-['Liberation_Serif','Noto_Sans_CJK_SC',serif] text-[16px] text-black">
        {lines.map((l, i) => (
          <div key={i} className={`flex items-baseline whitespace-pre leading-[18px] ${l.h}`}>
            {l.segs.map(([t, c], j) => (
              <span key={j} className={c}>{t}</span>
            ))}
          </div>
        ))}
        <span className="h-[18px] w-0.5 bg-black" />
      </div>
    </div>
  );
}

function Sidebar() {
  return (
    <div className="flex flex-1 flex-col items-center border-t border-[#aaa8a4] pr-px">
      <svg viewBox="0 0 12 12" className="mt-3.5 h-3 w-3" fill="none">
        <path d="M1 1.500h7M1 4h7M1 6.500h7" stroke="#3d4a63" strokeWidth="1.200" />
        <path d="M5 7.500h6L8 11z" fill="#142338" />
      </svg>
      <span className="mt-3 h-px w-[22px] bg-[#d8d7d5]" />
      <span className="mt-[3px] flex h-8 w-8 items-center justify-center rounded-[4px] border border-[#bbb9b5] bg-[#f3f2f0]">
        <Ico>
          <path
            d="M4.500 1.500L7 4.500 5.500 7 3 7 1 4.500C.5 8.500 3.500 11 7.500 10L14 16.500c-.8 4 2 6.500 6 6L18 20l.5-2.500 2.500-.5 2 2c.3-4-2.500-6-6.300-5.300L10.300 7.300C11 3.500 8 .8 4.500 1.500z"
            fill="#f8f8f6"
            stroke="#7f827d"
            strokeLinejoin="round"
          />
        </Ico>
      </span>
      <span className="mt-[7px]">
        <Ico>
          <path d="M3.500 2.500h12q5 0 5 5v14h-17z" fill="#f1f1ef" stroke="#92948f" />
          <path d="M15 3q1 5 5 5-1-4-5-5z" fill="#fff" stroke="#a7a9a5" strokeWidth=".8" />
        </Ico>
      </span>
      <span className="mt-3">
        <Ico>
          <path d="M4 2h17v5h-1.500L18 5h-3.500v15h-4V5H7L5.500 7H4z" fill="#5a5e5b" stroke="#393d3a" strokeWidth=".7" />
          <path d="M1 8v15h20z" fill="#79bf43" stroke="#3d8814" strokeWidth="1.200" />
          <path d="M5 16v3.500h5z" fill="#e3f5cf" stroke="#3d8814" />
        </Ico>
      </span>
      <span className="mt-2.5">
        <Ico>
          <path d="M9 4.500l3-3.500 3 3.500" stroke="#666" strokeWidth="1.200" />
          <SunsetScene />
          <path d="M3 6h18v5H3z" fill="#839cad" fillOpacity=".7" />
          <rect x="2" y="5" width="20" height="14" rx="1" stroke="#704008" strokeWidth="2.600" />
          <rect x="2" y="5" width="20" height="14" rx="1" stroke="#dd9730" strokeWidth="1.200" />
        </Ico>
      </span>
      <span className="mt-[11px]">
        <Ico>
          <circle cx="12" cy="12" r="10" fill="#fafafa" stroke="#7b7e7a" strokeWidth="2.200" />
          <circle cx="12" cy="12" r="9.800" stroke="#cbcdca" strokeWidth=".9" />
          <path d="M12 4v16M4 12h16" stroke="#d3d3d1" />
          <path d="M7 6.500l6.500 4-3 3z" fill="#e04343" />
          <path d="M17 17.500l-6.500-4 3-3z" fill="#44689d" />
        </Ico>
      </span>
    </div>
  );
}

function Writer() {
  return (
    <section className="absolute left-4 top-[27px] flex h-[717px] w-[1251px] flex-col rounded-t-[6px] bg-[#f1f0ee] shadow-[0_4px_26px_rgba(0,0,0,0.85)]">
      <TitleBar />
      <StandardBar />
      <FormatBar />
      <div className="flex flex-1">
        <div className="flex flex-1 flex-col">
          <div className="flex flex-1">
            <svg viewBox="0 0 7 6" className="ml-[7px] mt-2 h-1.5 w-[7px] shrink-0">
              <path d="M1 0v5h6" stroke="#8f8d86" strokeWidth="2" fill="none" />
            </svg>
            <div className="ml-[170px] flex flex-col pt-[2px]">
              <div className="pl-[2px]">
                <Ruler />
              </div>
              <Page />
            </div>
          </div>
        </div>
        <span className="mr-px mt-px h-[334px] w-3.5 bg-[#f28f68]" />
        <div className="flex w-[7px] flex-col border-x border-t border-[#aaa8a4] bg-[#f7f6f5]">
          <span className="-mx-px mt-[271px] flex h-[73px] items-center bg-[#979389]">
            <svg viewBox="0 0 6 8" className="ml-px h-2 w-[5px]">
              <path d="M0 0l6 4-6 4z" fill="#f4f3f1" />
            </svg>
          </span>
        </div>
        <div className="flex w-10 bg-[#f1f0ee]">
          <Sidebar />
        </div>
      </div>
    </section>
  );
}

export default function App() {
  return (
    <div className={`flex h-[768px] w-[1366px] flex-col overflow-hidden bg-[#6d1f45] ${UI}`}>
      <TopPanel />
      <div className="flex flex-1">
        <Launcher />
        <div className="relative flex flex-1 overflow-hidden">
          <BackWindow />
          <Writer />
        </div>
      </div>
    </div>
  );
}
